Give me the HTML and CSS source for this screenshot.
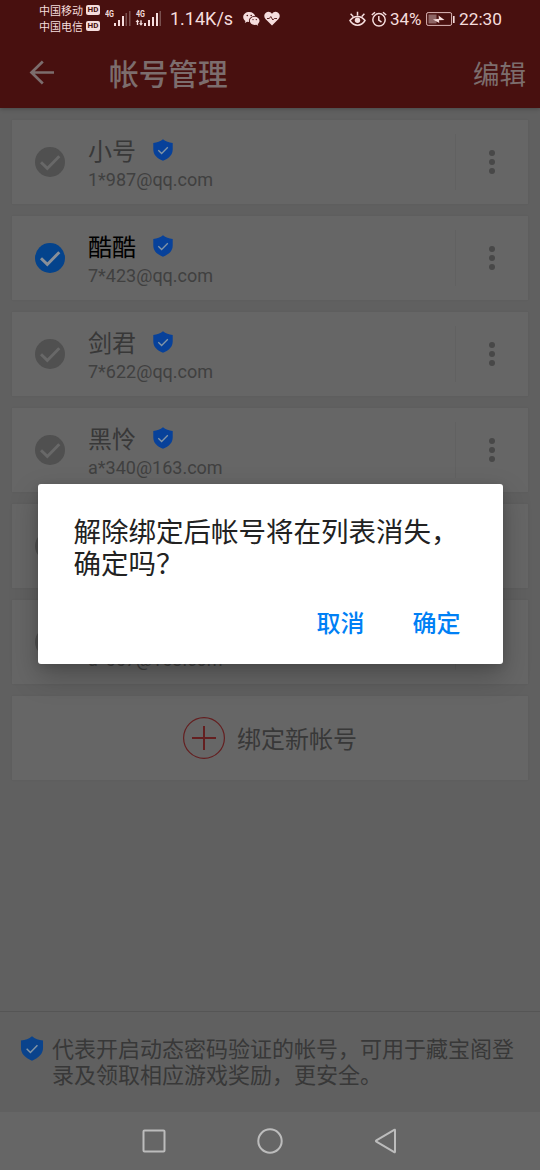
FILE: index.html
```html
<!DOCTYPE html>
<html lang="zh-CN">
<head>
<meta charset="utf-8">
<title>帐号管理</title>
<link rel="stylesheet" href="styles.css">
</head>
<body>
<svg class="defs" width="0" height="0">
  <symbol id="shield" viewBox="0 0 20 22"><path fill="currentColor" d="M10 .3C7.400 2.500 4.100 3.800.3 4v6.400c0 5.200 3.500 8.700 9.700 11.300 6.200-2.600 9.700-6.100 9.700-11.300V4C15.900 3.800 12.600 2.500 10 .3z"/><path d="M5.300 11.300l3.300 3.200 6.200-6.300" fill="none" stroke="#8295a7" stroke-width="1.300"/></symbol>
  <symbol id="check" viewBox="0 0 30 30"><circle cx="15" cy="15" r="15" fill="currentColor"/><path d="M6 15.200l6.300 6.200L24.300 9.200" fill="none" stroke="#686868" stroke-width="2.900"/></symbol>
  <symbol id="check-on" viewBox="0 0 30 30"><circle cx="15" cy="15" r="15" fill="currentColor"/><path d="M6 15.200l6.300 6.200L24.300 9.200" fill="none" stroke="#898f98" stroke-width="2.900"/></symbol>
  <symbol id="dots" viewBox="0 0 6 26"><g fill="currentColor"><circle cx="3" cy="4" r="3"/><circle cx="3" cy="13" r="3"/><circle cx="3" cy="22" r="3"/></g></symbol>
</svg>
<div class="screen">
  <header class="header">
    <div class="status">
      <div class="carriers">
        <div class="carrier">中国移动<b>HD</b></div>
        <div class="carrier">中国电信<b>HD</b></div>
      </div>
      <svg class="signals" width="58" height="20" viewBox="0 0 58 20" fill="#f5dddd">
        <text class="net" x="0" y="9" textLength="9" lengthAdjust="spacingAndGlyphs">4G</text><text class="net" x="31" y="9" textLength="9" lengthAdjust="spacingAndGlyphs">4G</text>
        <path d="M9 15h2v3H9zM13 12h2v6h-2zM17 8h2v10h-2z"/><path fill="#79504f" d="M20.500 5h1.500v13h-1.500zM24 3h1.500v15H24z"/>
        <path d="M32.500 11.500l2 2.500h-1.300v3h-1.400v-3h-1.300zM36 17.800l-2-2.500h1.300v-3h1.400v3H38zM39 15h2v3h-2zM43 12h2v6h-2zM47 9h2v9h-2zM51 5h2v13h-2z"/><path fill="#79504f" d="M54.500 3H56v15h-1.500z"/>
      </svg>
      <span class="speed">1.14K/s</span>
      <svg class="wechat" width="17" height="16" viewBox="0 0 17 16"><path fill="#f5dddd" d="M6.300 1C2.800 1 .2 3.100.2 6c0 1.700.9 3 2.200 3.900l-.6 2 2.300-1.200 2 .3C5.300 7.600 8 5 12.100 5 11.600 2.700 9.300 1 6.300 1z"/><path fill="#f5dddd" d="M16.500 9.800c0-2.300-2.200-4.100-4.900-4.100S6.800 7.500 6.800 9.800s2.100 4.100 4.800 4.100l1.700-.2 1.900 1-.5-1.600c1.100-.8 1.800-2 1.800-3.300z"/><g fill="#48100f"><circle cx="4.300" cy="4.500" r=".8"/><circle cx="8.200" cy="4.500" r=".8"/><circle cx="10" cy="8.600" r=".7"/><circle cx="13.300" cy="8.600" r=".7"/></g></svg>
      <svg class="heart" width="16" height="15" viewBox="0 0 16 15"><path fill="#f5dddd" d="M8 14.500L1.500 8C-.5 5.800.1 2.700 2.200 1.400 4.300.2 6.700.8 8 2.800 9.300.8 11.700.2 13.800 1.400c2.100 1.300 2.700 4.400.7 6.600z"/><path d="M3 7.500h2.300L6.800 5.500l2 3.500 1.500-1.500H13" fill="none" stroke="#48100f" stroke-width=".9"/></svg>
      <svg class="eye" width="17" height="16" viewBox="0 0 17 16" fill="none" stroke="#f5dddd" stroke-width="1.500"><path d="M1 9.500C4.800 4 12.200 4 16 9.500 12.200 15.800 4.800 15.800 1 9.500zM8.500 4.500V.8M4.200 5.500L1.600 2.800M12.800 5.500l2.600-2.700"/><circle cx="8.500" cy="9.300" r="2.700" fill="#f5dddd" stroke="none"/></svg>
      <svg class="alarm" width="16" height="16" viewBox="0 0 16 16" fill="none" stroke="#f5dddd" stroke-width="1.500"><circle cx="8" cy="8.800" r="6.200"/><path d="M7.800 5v4.200l2.700 2M.8 4L4 1.200M15.200 4L12 1.200"/></svg>
      <span class="percent">34%</span>
      <svg class="battery" width="29" height="14" viewBox="0 0 29 14"><rect x="2.500" y="2.500" width="8" height="9" fill="#8d6565"/><rect x=".6" y=".6" width="25" height="12.800" rx="1.500" fill="none" stroke="#ddb9b9"/><path fill="#f5dddd" d="M27 4h1.600v7H27zM7 7.500l6-.8-.5-3.200L18.500 8l-5.500.2.300 2.800z"/></svg>
      <span class="time">22:30</span>
    </div>
    <nav class="toolbar">
      <svg width="26" height="26" viewBox="0 0 26 26" fill="none" stroke="#7c6d6d" stroke-width="2.700"><path d="M25 12.500H3M13.800 1.500L2.500 12.500l11.300 11"/></svg>
      <h1>帐号管理</h1><span class="edit">编辑</span>
    </nav>
  </header>
  <main class="list">
    <div class="card"><svg class="check"><use href="#check"/></svg><div class="info"><div class="name">小号<svg><use href="#shield"/></svg></div><div class="mail">1*987@qq.com</div></div><div class="more"><svg><use href="#dots"/></svg></div></div>
    <div class="card on"><svg class="check"><use href="#check-on"/></svg><div class="info"><div class="name">酷酷<svg><use href="#shield"/></svg></div><div class="mail">7*423@qq.com</div></div><div class="more"><svg><use href="#dots"/></svg></div></div>
    <div class="card"><svg class="check"><use href="#check"/></svg><div class="info"><div class="name">剑君<svg><use href="#shield"/></svg></div><div class="mail">7*622@qq.com</div></div><div class="more"><svg><use href="#dots"/></svg></div></div>
    <div class="card"><svg class="check"><use href="#check"/></svg><div class="info"><div class="name">黑怜<svg><use href="#shield"/></svg></div><div class="mail">a*340@163.com</div></div><div class="more"><svg><use href="#dots"/></svg></div></div>
    <div class="card"><svg class="check"><use href="#check"/></svg><div class="info"></div><div class="more"></div></div>
    <div class="card"><svg class="check"><use href="#check"/></svg><div class="info low"><div class="mail">a*667@163.com</div></div><div class="more"></div></div>
    <div class="card add"><svg width="42" height="42" viewBox="0 0 42 42" fill="none" stroke="#641f20"><circle cx="21" cy="21" r="20.400" stroke-width="1.200"/><path d="M21 9v24M9 21h24" stroke-width="2"/></svg><span>绑定新帐号</span></div>
  </main>
  <footer class="tip"><svg><use href="#shield"/></svg><p>代表开启动态密码验证的帐号，可用于藏宝阁登录及领取相应游戏奖励，更安全。</p></footer>
  <div class="navbar">
    <svg width="24" height="26" viewBox="0 0 24 26"><rect x="1.500" y="2.500" width="21" height="21" rx="1"/></svg>
    <svg width="26" height="26" viewBox="0 0 26 26"><circle cx="13" cy="13" r="11.700"/></svg>
    <svg width="24" height="26" viewBox="0 0 24 26"><path d="M21 2.200v21.600q0 .8-.8.400L2.400 13.700q-1-.7 0-1.400L20.200 1.800q.8-.4.8.4z"/></svg>
  </div>
  <section class="dialog" role="dialog">
    <p>解除绑定后帐号将在列表消失，确定吗？</p>
    <div class="actions"><span>取消</span><span>确定</span></div>
  </section>
</div>
</body>
</html>
```

FILE: styles.css
```css
* { box-sizing: border-box; }
body { margin: 0; font-family: Roboto, "Noto Sans CJK SC", sans-serif; }
svg { display: block; flex: none; }
.defs { position: absolute; }
.screen { position: relative; width: 540px; height: 1170px; overflow: hidden; display: flex; flex-direction: column; background: #606060; color: #383838; }
.header { height: 108px; flex: none; background: #48100f; box-shadow: 0 1px 4px rgba(0,0,0,.25); }
.status { height: 37px; display: flex; align-items: center; padding-left: 39px; color: #f5dddd; font-size: 17.300px; white-space: nowrap; }
.carriers { width: 66px; padding-bottom: 1px; }
.carrier { display: flex; align-items: center; gap: 3px; height: 16.500px; font: 11px/16px "Noto Sans CJK SC", sans-serif; }
.carrier b { width: 14px; height: 10px; border-radius: 2px; background: #f5dddd; color: #48100f; font: bold 8px/10px Roboto, sans-serif; text-align: center; }
.signals { align-self: flex-start; margin-top: 8px; }
.net { font: bold 9.500px Roboto, sans-serif; }
.speed { width: 73px; margin-left: 7px; font-size: 18px; }
.heart { margin-left: 4px; }
.eye { margin-left: 69px; }
.alarm { margin-left: 5px; }
.percent { width: 35px; margin-left: 3px; font-size: 17px; }
.battery { margin-left: 1px; }
.time { margin-left: 4px; }
.toolbar { display: flex; align-items: center; height: 71px; padding: 0 14px 0 29px; color: #7c6d6d; }
.toolbar h1 { margin: 0 0 0 54px; font: 500 29.700px/40px "Noto Sans CJK SC", sans-serif; }
.edit { margin-left: auto; font-size: 26.500px; }
.list { padding: 12px; display: flex; flex-direction: column; gap: 12px; }
.card { height: 84px; display: flex; align-items: center; padding-left: 23px; background: #666; box-shadow: 0 0 2px rgba(0,0,0,.06); }
.check { width: 30px; height: 30px; color: #505050; }
.on .check { color: #04438c; }
.on .name { color: #000; }
.info { flex: 1; padding: 2px 0 0 23px; }
.low { padding-top: 36px; }
.name { display: flex; align-items: center; gap: 17px; font-size: 24px; line-height: 34px; }
.name svg { width: 20px; height: 22px; color: #07419a; margin-top: -4px; }
.mail { font-size: 18px; line-height: 22px; color: #404040; }
.more { width: 73px; height: 56px; border-left: 1px solid #616161; display: flex; align-items: center; justify-content: center; color: #484848; }
.more svg { width: 6px; height: 26px; }
.add { padding-left: 171px; gap: 12px; font-size: 24px; }
.add span { margin-top: -2px; }
.tip { flex: none; height: 101px; margin-top: auto; border-top: 1px solid #555; padding: 24px 20px; display: flex; gap: 8px; }
.tip svg { width: 24px; height: 25px; color: #0a438c; }
.tip p { margin: 0; width: 465px; font-size: 22px; line-height: 26px; padding-top: 1px; }
.navbar { height: 58px; flex: none; background: #666; display: flex; align-items: center; padding-left: 142px; gap: 91px; }
.navbar svg { fill: none; stroke: #bcbcbc; stroke-width: 2; }
.dialog { position: absolute; left: 37.500px; top: 484px; width: 465px; height: 180px; border-radius: 3px; background: #fff; color: #222; box-shadow: 0 12px 28px rgba(0,0,0,.25), 0 2px 8px rgba(0,0,0,.12); padding: 33px 36px 20px; display: flex; flex-direction: column; justify-content: space-between; }
.dialog p { margin: 0; width: 390px; font-size: 27.500px; line-height: 32px; }
.actions { display: flex; justify-content: flex-end; gap: 48px; padding-right: 6px; color: #0080f5; font-size: 24px; line-height: 40px; font-weight: 500; }
```
